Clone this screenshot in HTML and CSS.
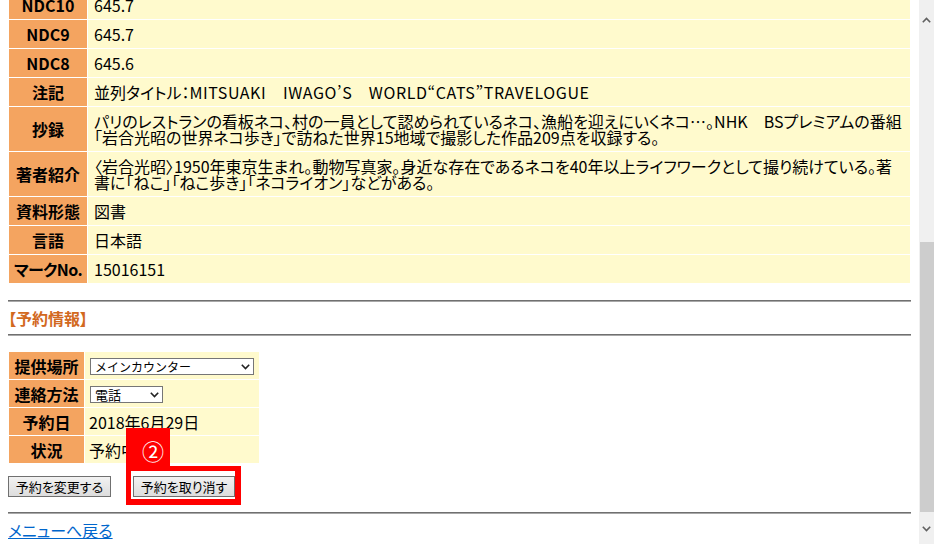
FILE: index.html
```html
<!DOCTYPE html>
<html lang="ja">
<head>
<meta charset="utf-8">
<title>予約情報</title>
<link rel="stylesheet" href="styles.css">
</head>
<body>
<div class="screen">
  <div class="viewport">
    <div class="page">
      <table class="detail">
        <colgroup><col class="col-label"><col></colgroup>
        <tr><th>NDC10</th><td>645.7</td></tr>
        <tr><th>NDC9</th><td>645.7</td></tr>
        <tr><th>NDC8</th><td>645.6</td></tr>
        <tr><th>注記</th><td>並列タイトル：<span class="latin">MITSUAKI　IWAGO’S　WORLD“CATS”TRAVELOGUE</span></td></tr>
        <tr><th>抄録</th><td>パリのレストランの看板ネコ、村の一員として認められているネコ、漁船を迎えにいくネコ…。NHK　BSプレミアムの番組<br>「岩合光昭の世界ネコ歩き」で訪ねた世界15地域で撮影した作品209点を収録する。</td></tr>
        <tr><th>著者紹介</th><td>〈岩合光昭〉1950年東京生まれ。動物写真家。身近な存在であるネコを40年以上ライフワークとして撮り続けている。著<br>書に「ねこ」「ねこ歩き」「ネコライオン」などがある。</td></tr>
        <tr><th>資料形態</th><td>図書</td></tr>
        <tr><th>言語</th><td>日本語</td></tr>
        <tr><th class="tight">マークNo.</th><td>15016151</td></tr>
      </table>

      <hr class="rule rule-top">
      <h2 class="section">【予約情報】</h2>
      <hr class="rule rule-mid">

      <table class="reserve">
        <colgroup><col class="col-rlabel"><col class="col-rvalue"></colgroup>
        <tr>
          <th>提供場所</th>
          <td>
            <span class="select select-wide">
              <select><option>メインカウンター</option></select>
              <svg class="chev" width="9" height="6" viewBox="0 0 9 6"><polyline points="0.8,0.8 4.5,4.5 8.2,0.8" fill="none" stroke="#222" stroke-width="1.6"/></svg>
            </span>
          </td>
        </tr>
        <tr>
          <th>連絡方法</th>
          <td>
            <span class="select select-narrow">
              <select><option>電話</option></select>
              <svg class="chev" width="9" height="6" viewBox="0 0 9 6"><polyline points="0.8,0.8 4.5,4.5 8.2,0.8" fill="none" stroke="#222" stroke-width="1.6"/></svg>
            </span>
          </td>
        </tr>
        <tr><th>予約日</th><td>2018年6月29日</td></tr>
        <tr><th>状況</th><td>予約中</td></tr>
      </table>

      <div class="actions">
        <button class="btn btn-change" type="button">予約を変更する</button>
        <span class="callout">
          <button class="btn btn-cancel" type="button">予約を取り消す</button>
          <span class="frame"></span>
          <span class="badge">②</span>
        </span>
      </div>

      <hr class="rule rule-bottom">
      <a class="back" href="#">メニューへ戻る</a>
    </div>
  </div>
  <div class="scrollbar">
    <div class="sb-btn sb-up">
      <svg width="9" height="6" viewBox="0 0 9 6"><polyline points="0.8,5.2 4.5,1.4 8.2,5.2" fill="none" stroke="#606060" stroke-width="1.6"/></svg>
    </div>
    <div class="sb-track"><div class="sb-thumb"></div></div>
    <div class="sb-btn sb-down">
      <svg width="9" height="6" viewBox="0 0 9 6"><polyline points="0.8,0.8 4.5,4.6 8.2,0.8" fill="none" stroke="#606060" stroke-width="1.6"/></svg>
    </div>
  </div>
</div>
</body>
</html>
```

FILE: styles.css
```css
html, body {
  margin: 0;
  padding: 0;
  background: #ffffff;
}

body {
  font-family: "Noto Sans CJK JP", "Noto Sans", sans-serif;
  font-feature-settings: "palt";
  font-size: 16px;
  color: #000000;
}

.screen {
  display: flex;
  width: 934px;
  height: 544px;
  overflow: hidden;
}

.viewport {
  flex: 1;
  overflow: hidden;
}

.page {
  margin-top: -10px;
  padding: 0 8px;
}

/* detail table */
.detail {
  width: 100%;
  table-layout: fixed;
  border-collapse: separate;
  border-spacing: 1px;
}

.col-label {
  width: 78px;
}

.detail th,
.detail td {
  padding: 6px 0;
  line-height: 16px;
  font-size: 16px;
}

.detail th {
  background: #f4a460;
  font-weight: bold;
  text-align: center;
  white-space: nowrap;
  overflow: hidden;
}

.detail th.tight {
  letter-spacing: -0.6px;
}

.detail td {
  padding-left: 6px;
  background: #fffacd;
  text-align: left;
  white-space: nowrap;
}

.latin {
  letter-spacing: 0.6px;
}

/* rules */
.rule {
  height: 0;
  margin: 0;
  border: 0;
  border-top: 1px solid #707070;
  border-bottom: 1px solid #a8a8a8;
}

.rule-top {
  margin-top: 16px;
}

.rule-mid {
  margin-top: 8px;
}

.rule-bottom {
  margin-top: 15px;
}

.section {
  margin: 8px 0 0;
  font-size: 16px;
  line-height: 16px;
  font-weight: bold;
  color: #d2691e;
}

/* reservation table */
.reserve {
  margin-top: 15px;
  width: 252px;
  table-layout: fixed;
  border-collapse: separate;
  border-spacing: 1px;
}

.col-rlabel {
  width: 75px;
}

.col-rvalue {
  width: 174px;
}

.reserve th,
.reserve td {
  height: 27px;
  padding: 0;
  line-height: 16px;
  font-size: 16px;
}

.reserve th {
  background: #f4a460;
  font-weight: bold;
  text-align: center;
  white-space: nowrap;
}

.reserve td {
  background: #fffacd;
  padding-left: 4px;
  text-align: left;
  white-space: nowrap;
}

.select {
  position: relative;
  display: inline-block;
  vertical-align: middle;
  margin-left: 1px;
}

.select select {
  display: block;
  -webkit-appearance: none;
  appearance: none;
  height: 17px;
  margin: 0;
  padding: 0 0 0 4px;
  border: 1px solid #767676;
  border-radius: 0;
  background: #ffffff;
  font-family: "Noto Sans CJK JP", sans-serif;
  font-size: 12px;
  line-height: 15px;
  color: #000;
}

.select-wide select {
  width: 164px;
}

.select-narrow select {
  width: 73px;
  font-size: 13px;
}

.select .chev {
  position: absolute;
  right: 4px;
  top: 6px;
  pointer-events: none;
}

/* buttons */
.actions {
  display: flex;
  align-items: center;
  gap: 22px;
  margin-top: 12px;
}

.btn {
  height: 21px;
  margin: 0;
  padding: 0;
  border: 1px solid #707070;
  border-radius: 0;
  background: linear-gradient(#f2f2f2, #dddddd);
  font-family: "Noto Sans CJK JP", sans-serif;
  font-feature-settings: "palt";
  font-size: 13px;
  line-height: 17px;
  white-space: nowrap;
  color: #000;
}

.btn-change {
  width: 103px;
}

.btn-cancel {
  width: 102px;
}

.callout {
  position: relative;
  display: inline-block;
}

.callout .btn {
  display: block;
  position: relative;
  z-index: 2;
}

.frame {
  position: absolute;
  left: -7px;
  top: -10px;
  width: 104px;
  height: 28px;
  border-style: solid;
  border-color: #ff0000;
  border-width: 5px 6px 6px 5px;
  background: #ffffff;
  z-index: 1;
}

.badge {
  position: absolute;
  left: -7px;
  top: -48px;
  width: 44px;
  height: 38px;
  padding: 11px 0 0 16px;
  box-sizing: border-box;
  background: #ff0000;
  color: #ffffff;
  font-size: 22px;
  line-height: 22px;
  z-index: 3;
}

/* back link */
.back {
  display: inline-block;
  margin-top: 6px;
  color: #0066cc;
  font-size: 16px;
  line-height: 20px;
  text-decoration: underline;
}

/* fake scrollbar */
.scrollbar {
  width: 15px;
  display: flex;
  flex-direction: column;
  background: #f0f0f0;
}

.sb-btn {
  display: flex;
  align-items: center;
  justify-content: center;
  flex: none;
}

.sb-up {
  height: 40px;
}

.sb-down {
  height: 34px;
}

.sb-track {
  flex: 1;
  display: flex;
  flex-direction: column;
  padding-left: 1px;
}

.sb-thumb {
  margin-top: 202px;
  height: 270px;
  background: #cdcdcd;
}
```
